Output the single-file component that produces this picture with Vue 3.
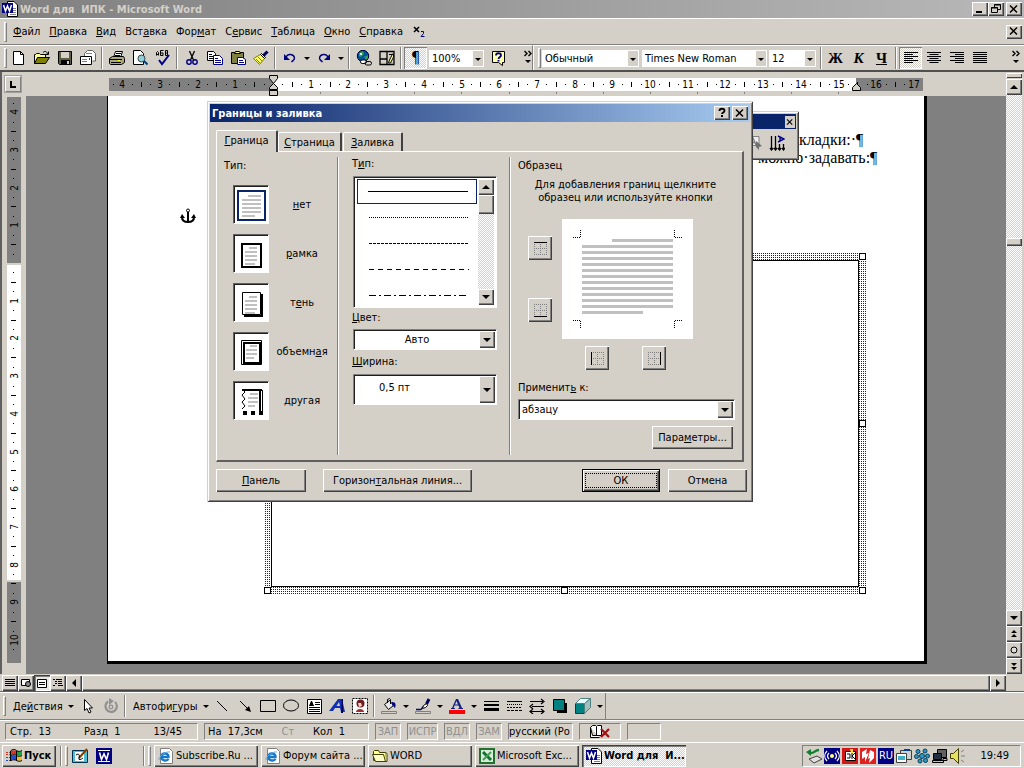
<script setup>
import { h } from 'vue'

const art = {
  word: '<path fill="#fff" stroke="#000" d="M5.500.5H12l3.500 3.500v11.500h-10z"/><path stroke="#808080" d="M11 7.500h3M11 9.500h3M11 11.500h3M8 13.500h6"/><path fill="#000080" d="M0 2h11v10H0z"/><path fill="none" stroke="#fff" stroke-width="1.500" d="M1.500 4l2 6 2-5 2 5 2-6"/>',
  newdoc: '<path fill="#fff" stroke="#000" d="M2.500 1.500h7l3 3v10h-10z"/><path fill="none" stroke="#000" d="M9.500 1.500v3h3"/>',
  open: '<path fill="#ffff9c" stroke="#000" d="M.5 13.500v-9h1l1-1h3l1 1h5v3"/><path fill="#808000" stroke="#000" d="M.5 13.500l3-6h12l-4 6z"/><path fill="none" stroke="#000" d="M9 2.500c2-2 4-1 4.500 1.500M11.500 4.500h3v-3"/>',
  save: '<path fill="#606040" stroke="#000" d="M1.500 1.500h13v13h-12l-1-1z"/><path fill="#d4d0c8" d="M4 2h8v6H4z"/><path fill="#000" d="M4 10h9v5H4z"/><path fill="#d4d0c8" d="M10 11h2v3h-2z"/>',
  mail: '<path fill="#fff" stroke="#606060" d="M4.500 7V3.500l3-3h5l3 3V11h-3"/><path fill="#fff" stroke="#000" d="M.5 6.500h11v8H.5z"/><path stroke="#808080" d="M2 9.500h5M2 11.500h5M6 3.500h6"/><path fill="#404040" d="M9 8h1v2H9z"/>',
  print: '<path fill="#fff" stroke="#000" d="M4.500 7.500l2-6h7l-2 6"/><path fill="#a8a878" stroke="#000" d="M.5 8.500l3-2h11l1 2v4l-3 2H1.500l-1-1z"/><path stroke="#000" d="M1 9.500h12M2 12.500h10M7 3.500h5M6 5.500h5"/><path fill="#ff0" d="M9 10h2v1H9z"/>',
  preview: '<path fill="#fff" stroke="#000" d="M1.500.5h7l3 3v11h-10z"/><circle cx="9.500" cy="8.500" r="3.500" fill="#8fd0d8" stroke="#404040"/><path stroke="#004080" stroke-width="2" d="M12 11l3.500 3.500"/>',
  spell: '<path fill="none" stroke="#000" d="M1.500 5.500v-3l1-1 1 1v3M1.500 4.500h2M8.500.5h-3v5h2.500V3H5.500M10.500.500v5h2V3h-1.500M10.500.500h2V3"/><path fill="none" stroke="#000080" stroke-width="2" d="M4 10l3 4 7-9"/>',
  cut: '<path stroke="#000" stroke-width="1.300" d="M5.500 1l4 9M10.500 1l-4 9"/><circle cx="5" cy="12" r="2.200" fill="none" stroke="#000080" stroke-width="1.400"/><circle cx="11" cy="12" r="2.200" fill="none" stroke="#000080" stroke-width="1.400"/>',
  copy: '<path fill="#fff" stroke="#000" d="M.5 1.500h6l2 2v7h-8z"/><path stroke="#000" d="M2 4.500h3M2 6.500h5M2 8.500h5"/><path fill="#fff" stroke="#000080" d="M6.500 5.500h6l3 3v6h-9z"/><path stroke="#000080" d="M8 8.500h3M8 10.500h6M8 12.500h6"/>',
  paste: '<path fill="#808040" stroke="#000" d="M1.500 2.500h12v11h-12z"/><path fill="#ffff9c" stroke="#000" d="M4.500 3.500l1-2h4l1 2z"/><path fill="#fff" stroke="#000080" d="M7.500 7.500h5l3 2v5h-8z"/><path stroke="#000080" d="M9 10.500h4M9 12.500h5"/>',
  brush: '<path fill="#ffff60" stroke="#808000" d="M.5 8.500l7-4 4 4-5 6z"/><path stroke="#808000" d="M3 9l4 4M5 7l4 4"/><path fill="#fff" stroke="#000" d="M7.500 4.500l1-1 4 4-1 1z"/><path stroke="#000060" stroke-width="3" d="M10.500 5.500l4-4"/>',
  undo: '<path fill="none" stroke="#000080" stroke-width="1.400" d="M4 7c2-4 8-3 8.500 1 0 2-1 2-3 4"/><path fill="#000080" d="M2 4v6h6z"/>',
  redo: '<path fill="none" stroke="#000080" stroke-width="1.400" d="M12 7c-2-4-8-3-8.500 1 0 2 1 2 3 4"/><path fill="#000080" d="M14 4v6H8z"/>',
  web: '<circle cx="7" cy="6" r="5.700" fill="#0050a0" stroke="#003"/><path fill="#30a050" d="M3 3l4-2 1 3-3 3-2-1zM8 7l4-2v3l-2 2z"/><path fill="#d8f0ff" d="M4 3h2v2H4z"/><rect x="4.500" y="10" width="6" height="3.500" rx="1.700" fill="#fff" stroke="#000"/><rect x="9" y="11.500" width="6.500" height="3.500" rx="1.700" fill="none" stroke="#000"/>',
  tables: '<path fill="none" stroke="#000" stroke-width="1.300" d="M1 1.500h14v13H1zM8 1v13M1 9h7"/><path fill="#ffff9c" stroke="#000" d="M9.500 13l1-3 3-6h1v3l-3 6zM10 4.500h4"/>',
  help: '<path fill="#ffffb0" stroke="#000" d="M1.500 1.500h12v11h-2v3l-4-3h-6z"/><path fill="none" stroke="#000080" stroke-width="1.800" d="M5 5.500c0-3 5-3 5 0 0 1.500-2.500 1.500-2.500 3.500"/><path fill="#000080" d="M6.500 10h2v1.500h-2z"/>',
  al: '<path stroke="#000" d="M1 2.500h14M1 4.500h9M1 6.500h14M1 8.500h9M1 10.500h14M1 12.500h9"/>',
  ac: '<path stroke="#000" d="M1 2.500h14M3.500 4.500h9M1 6.500h14M3.500 8.500h9M1 10.500h14M3.500 12.500h9"/>',
  ar: '<path stroke="#000" d="M1 2.500h14M6 4.500h9M1 6.500h14M6 8.500h9M1 10.500h14M6 12.500h9"/>',
  aj: '<path stroke="#000" d="M1 2.500h14M1 4.500h14M1 6.500h14M1 8.500h14M1 10.500h14M1 12.500h14"/>',
  sub: '<path stroke="#000" stroke-width="1.600" d="M2 3l5 5M7 3l-5 5"/><path fill="none" stroke="#000080" d="M9 7.500h2.500v2L9 12.500h3.500"/>',
  chev: '<path fill="none" stroke="#000" stroke-width="1.400" d="M4.500 1l2.500 2.500L4.500 6M8.500 1L11 3.500 8.500 6"/><path fill="#000" d="M5 10h6l-3 3z"/>',
  min: '<path fill="#000" d="M4 10h6v2H4z"/>',
  restore: '<path fill="none" stroke="#000" d="M6.500 6V3.500h6v5H10M6 4h7M3.500 6.500h6v5h-6zM3 7h7"/>',
  close: '<path stroke="#000" stroke-width="1.500" d="M4 4.500l7 7M11 4.500l-7 7"/>',
  q: '<path fill="none" stroke="#000" stroke-width="1.800" d="M5.500 6c0-3 5-3 5 0 0 1.500-2.500 1.500-2.500 3"/><path fill="#000" d="M7 10h2v2H7z"/>',
  up: '<path fill="#000" d="M4 10h8L8 6z"/>', down: '<path fill="#000" d="M4 6h8l-4 4z"/>',
  left: '<path fill="#000" d="M10 4v8L6 8z"/>', right: '<path fill="#000" d="M6 4v8l4-4z"/>',
  tri: '<path fill="#000" d="M5 7h6l-3 3z"/>',
  pgup: '<path fill="#000" d="M5 7h6L8 4zM5 11h6L8 8z"/>', pgdn: '<path fill="#000" d="M5 5h6l-3 3zM5 9h6l-3 3z"/>',
  ball: '<circle cx="8" cy="8" r="3" fill="#ddd" stroke="#000"/>',
  v1: '<path stroke="#000" d="M3 4.500h10M3 6.500h10M3 8.500h10M3 10.500h10"/>',
  v2: '<path fill="#fff" stroke="#000" d="M3.500 4.500h8v6h-8z"/><circle cx="10" cy="9" r="2.500" fill="#888" stroke="#000"/>',
  v3: '<path fill="#fff" stroke="#000" d="M3.500 4.500h9v8h-9z"/><path stroke="#000" d="M5 7.500h6M5 9.500h6"/>',
  v4: '<path stroke="#000" d="M3 4.500h2M6 4.500h6M5 6.500h2M8 6.500h4M5 8.500h2M8 8.500h4M3 10.500h2M8 10.500h5"/>',
  cursor: '<path fill="#fff" stroke="#000" d="M4.500 1.500v11l2.500-2 2 4.500 2-1-2-4h3.500z"/>',
  rotate: '<path fill="none" stroke="#909090" stroke-width="2.200" d="M12 4a5.700 5.700 0 1 1-7-.5"/><circle cx="8" cy="9" r="1.800" fill="none" stroke="#909090" stroke-width="1.300"/><path fill="#909090" d="M6 0l5 3-5 4z"/>',
  line: '<path stroke="#000" d="M3 3l10 10"/>',
  arrow: '<path stroke="#000" d="M3 3l9 9"/><path fill="#000" d="M14 14l-6-2 4-4z"/>',
  rect: '<path fill="none" stroke="#000" d="M.5 2.500h15v11H.5z"/>',
  oval: '<ellipse cx="8" cy="7.500" rx="7.500" ry="5.500" fill="none" stroke="#000"/>',
  tbox: '<path fill="#fff" stroke="#000" d="M1.500 1.500h14v14h-14z"/><path stroke="#000" d="M9 4.500h5M9 6.500h5M3 9.500h11M3 11.500h11M3 13.500h11M3.500 8l2-5 2 5M4 6.500h3"/>',
  wart: '<path fill="#1030b0" d="M0 13L9 1h4l3 13h-4l-1-4H6l-2 3zM7.500 8H11l-1-4z"/><path fill="#000060" d="M13 1h1v14h-2z"/>',
  clip: '<path fill="#fff" stroke="#000" stroke-dasharray="2 1" d="M.5.500h15v15H.5z"/><circle cx="8.500" cy="5.500" r="4" fill="#702020"/><path fill="#ffd0c0" d="M6 5h3l1 3-3 1z"/><path fill="#a03030" d="M4 14c0-4 8-4 8 0z"/>',
  fill: '<path fill="#e8e8e8" stroke="#000" d="M3.500 6.500l5-4 4 5-5 4z"/><path fill="none" stroke="#000" d="M6.500 5V1.500l2-1 1 1V6"/><path fill="#000080" d="M11 4c4 0 4 3 3 6l-3-3z"/><path fill="#d4d0c8" stroke="#808080" d="M.5 13.500h15v2H.5z"/>',
  pen: '<path fill="none" stroke="#000080" stroke-width="1.300" d="M1 11.500h5l2-3"/><path fill="#fff" stroke="#000" d="M7.500 10.500l1-3 3-2 1 2-2 2z"/><path stroke="#000060" stroke-width="3" d="M11.500 6L14 1"/><path fill="#d4d0c8" stroke="#808080" d="M.5 13.500h15v2H.5z"/>',
  fcol: '<path fill="#102080" d="M3 10L7 1h2l4 9h1v1H9.500v-1h1l-1-2.500h-4L4.500 10H6v1H2v-1zM6 6.500h3L7.500 3z"/><path fill="red" d="M0 12h16v4H0z"/>',
  lw: '<path fill="#000" d="M1 3h15v1H1zM1 6h15v2H1zM1 10h15v3H1z"/>',
  ls: '<path stroke="#000" stroke-dasharray="1 1" d="M1 6.500h15"/><path stroke="#000" stroke-dasharray="2 1" d="M1 9.500h15"/><path stroke="#000" stroke-dasharray="3 1" d="M1 12.500h15"/><path stroke="#000" d="M1 3.500h15"/>',
  as: '<path stroke="#000" d="M1 3.500h13M3 8.500h12M1 13.500h14"/><path fill="none" stroke="#000" stroke-width="1.200" d="M12 1l3 2.500L12 6M4 6L1 8.500 4 11M12 11l3 2.500-3 2.500M4 11l-3 2.500L4 16"/>',
  shad: '<path fill="#000" d="M5 5h10v10H5z"/><path fill="#008080" stroke="#000" d="M1.500 1.500h11v11h-11z"/>',
  cube: '<path fill="#008080" stroke="#004040" d="M.5 5.500h9v10h-9z"/><path fill="#e8ffff" stroke="#508080" d="M.5 5.500l5-5h10l-6 5z"/><path fill="#a0c0c0" stroke="#508080" d="M9.500 5.500l6-5v9l-6 6z"/>',
  ie: '<path fill="#fff" stroke="#808080" d="M2.500.5h9l3 3v12h-12z"/><path fill="none" stroke="#1878c8" stroke-width="2.400" d="M3 9h7.500C11 5 4 4 3.500 8.500 3 13 9 13.500 10.500 11"/><path fill="none" stroke="#60a8e0" d="M1 12C0 9 8 3 12 4"/>',
  folder: '<path fill="#ffff90" stroke="#404000" d="M1.500 12.500v-9l1-1h4l1 2h6v8z"/><path fill="#ffffc8" stroke="#404000" d="M13.500 13.500l-2-7H.5l3 7zM13.500 4.500l1.500 1v8h-2"/>',
  xls: '<path fill="#d8ead8" stroke="#207030" stroke-width="2" d="M1 1h14v14H1z"/><path stroke="#107030" stroke-width="3" d="M4 4l8 8"/><path stroke="#40a050" stroke-width="2" d="M12 4l-8 8"/>',
  win: '<path fill="#e03020" d="M5 3c2-1 3-1 5 0v4c-2-1-3-1-5 0z"/><path fill="#20a040" d="M11 3c2 1 3 1 5 0v4c-2 1-3 1-5 0z"/><path fill="#2050d0" d="M5 8c2-1 3-1 5 0v4c-2-1-3-1-5 0z"/><path fill="#f0c020" d="M11 8c2 1 3 1 5 0v4c-2 1-3 1-5 0z"/><path fill="none" stroke="#000" d="M4.500 13V3c2-2 4-2 6-.5s4 1 5.500 0M10.500 3v10M5 7.500c2-1 4-1 5.500 0s4 1 5.500 0M5 12.500c2-1 4-1 5.500 0s4 1 5.500 0"/><path stroke="#e03020" stroke-dasharray="2 1" d="M0 4.500h4M0 6.500h4"/><path stroke="#2050d0" stroke-dasharray="2 1" d="M0 9.500h4M0 12.500h4"/>',
  desk: '<path fill="#50c0d0" stroke="#003050" d="M.5 2.500h15v12H.5z"/><path fill="#fff" d="M3 4h9v9H3z"/><path stroke="#804000" stroke-width="2" d="M7 10l8-9"/><path fill="none" stroke="#000" d="M4 7c3-2 4 0 3 3s3 1 4 0"/>',
  wd: '<path fill="#fff" stroke="#000080" stroke-width="2" d="M1 1h14v14H1z"/><path fill="#000080" d="M2 3h12v10H2z"/><path fill="none" stroke="#fff" stroke-width="1.600" d="M3.500 4.500l2 7L8 6l2.500 5.500 2-7"/>',
  book: '<path fill="#fff" stroke="#000" d="M1.500 3.500l2-2h3l1 1 1-1h4v10H3.500zM7.500 2.500v9M1.500 3.500v10h9"/><path stroke="#a01010" stroke-width="2.200" d="M12 5l8 8M20 5l-8 8"/>',
  t1: '<path fill="#e0e0e0" stroke="#404040" d="M3 11l8-3 5 3-8 4z"/><path fill="none" stroke="#108030" stroke-width="2.500" d="M13 2C8 2 9 6 3 5"/><path fill="#108030" d="M0 4l5-3v7z"/>',
  t2: '<path fill="#000080" d="M0 0h16v16H0z"/><circle cx="8" cy="8" r="2" fill="#ffff80"/><path fill="none" stroke="#fff" stroke-width="1.200" d="M5 5c-2 2-2 4 0 6M11 5c2 2 2 4 0 6M3 3c-3 3-3 7 0 10M13 3c3 3 3 7 0 10"/>',
  t3: '<path fill="#d01818" d="M0 0h16v16H0z"/><path fill="#fff" stroke="#000" d="M3.500 3.500h10v9h-10z"/><path fill="none" stroke="#000" d="M5 6h3v4H5M10 5v6M10 8l3-3M10 8l3 3"/><path fill="#ffe020" d="M8 1h3v4H9z"/>',
  t4: '<path fill="#e02020" d="M0 0h16v16H0z"/><path fill="#fff" d="M2 4l5-3-1 5 3-1-4 9V9L2 11zM10 2l4 2v6l-5 5 1-5-2 1z"/>',
  t6: '<path fill="#d0d0d0" stroke="#404040" d="M4.500 2.500h11v9h-11z"/><path fill="#fff" stroke="#404040" d="M.5 5.500h10v9H.5z"/><path fill="#40b0c8" d="M2 8h7v4H2z"/><path stroke="#0040a0" stroke-width="2" d="M8 2h6"/>',
  t7: '<g fill="#3098c0" stroke="#004060"><circle cx="4" cy="3.500" r="2"/><circle cx="11" cy="3" r="2"/><circle cx="2.500" cy="8.500" r="2"/><circle cx="13.500" cy="8" r="2"/><circle cx="8" cy="8" r="2.500"/><circle cx="6" cy="13" r="2"/><circle cx="11.500" cy="12.500" r="2"/></g>',
  t8: '<path fill="#606060" stroke="#000" d="M5.500 1.500h9v8h-9z"/><path fill="#203040" stroke="#000" d="M1.500 5.500h8v6h-8z"/><path fill="#c0c0c0" stroke="#000" d="M.5 12.500h11v2H.5zM11 10.500h4v2h-4z"/>',
  t9: '<path fill="#e8e060" stroke="#404000" d="M.5 5.500h3l5-5v15l-5-5h-3z"/><path stroke="#808080" d="M11 4l3-2M11 8h4M11 12l3 2"/>',
  tdir: '<path stroke="#000" stroke-width="1.300" d="M2.500 1v14M6.500 1v14M10.500 9v6M14.500 9v6M1 13l1.500 2L4 13M5 13l1.500 2L8 13M9 13l1.500 2 1.500-2M13 13l1.500 2 1.500-2" fill="none"/><path fill="none" stroke="#000080" stroke-width="1.400" d="M9 1l6 3-6 3M11 2v4"/>',
  frame: '<path fill="#eee" stroke="#808080" d="M-4 1.500h16v9H-4z"/><path fill="none" stroke="#808080" stroke-width="1.400" d="M3 10l3-7 3 7M4 7.500h4"/><path fill="#707070" d="M9 6l6 5-3 1 0 3-3-3z"/>',
  anchor: '<circle cx="8" cy="2.500" r="1.500" fill="#fff" stroke="#000"/><path fill="none" stroke="#000" stroke-width="2" d="M8 4v10M2 9c0 3 2 5 6 5s6-2 6-5"/><path fill="#000" d="M0 10l2-4 3 4zM16 10l-2-4-3 4z"/>',
  bt: '<path stroke="#808080" stroke-dasharray="1 1" fill="none" d="M2.500 2v13M8.500 2v13M14.500 2v13M2 8.500h13M2 14.500h13"/><path stroke="#000" d="M2 2.500h13"/>',
  bb: '<path stroke="#808080" stroke-dasharray="1 1" fill="none" d="M2.500 2v13M8.500 2v13M14.500 2v13M2 8.500h13M2 2.500h13"/><path stroke="#000" d="M2 14.500h13"/>',
  bl: '<path stroke="#808080" stroke-dasharray="1 1" fill="none" d="M8.500 2v13M14.500 2v13M2 2.500h13M2 8.500h13M2 14.500h13"/><path stroke="#000" d="M2.500 2v13"/>',
  br: '<path stroke="#808080" stroke-dasharray="1 1" fill="none" d="M8.500 2v13M2.500 2v13M2 2.500h13M2 8.500h13M2 14.500h13"/><path stroke="#000" d="M14.500 2v13"/>',
}
const smallLines = '<path stroke="#c0c0c0" stroke-width="2" d="M14 12h8M10 16h12M10 20h12M10 24h12M10 28h10"/>'
const kinds = [
  { t: '&нет', a: '<path fill="#fff" stroke="#0a246a" stroke-width="2" d="M3 4h27v29H3z"/><path stroke="#c0c0c0" stroke-width="2" d="M13 9h13M7 13h19M7 17h19M7 21h19M7 25h19M7 29h13"/>' },
  { t: '&рамка', a: '<path fill="none" stroke="#000" stroke-width="2" d="M7 8h19v23H7z"/>' + smallLines },
  { t: 'т&ень', a: '<path fill="none" stroke="#000" d="M7.500 7.500h18v22h-18z"/><path stroke="#000" stroke-width="2" d="M9 31h18V9" fill="none"/>' + smallLines },
  { t: 'объемн&ая', a: '<path fill="none" stroke="#000" d="M6.500 6.500h20v24h-20z"/><path fill="none" stroke="#000" stroke-width="2" d="M9 9h16v20H9z"/><path stroke="#c0c0c0" stroke-width="2" d="M15 12h7M11 16h11M11 20h11M11 24h8"/>' },
  { t: '&другая', a: '<path fill="none" stroke="#000" d="M8 7l2 2-3 3 3 4-3 3 3 4-3 3"/><path fill="none" stroke="#000" stroke-width="2" d="M7 7h20M25 8v22"/><path stroke="#000" d="M27.500 7v22"/><path fill="#000" d="M8 28h4v4H8zM16 28h4v4h-4zM24 28h4v4h-4z"/><path stroke="#c0c0c0" stroke-width="2" d="M15 11h8M13 15h10M13 19h10M13 23h7"/>' },
]
const svg = (inner, w, hh) => h('svg', { width: w, height: hh, viewBox: `0 0 ${w} ${hh}`, 'aria-hidden': 'true', innerHTML: inner })
const Ic = (p) => svg(art[p.n], p.w || 16, 16)
Ic.props = ['n', 'w']
const Pic = (p) => svg(p.a, 33, 37)
Pic.props = ['a']
const Mn = (p) => {
  const i = p.t.indexOf('&')
  return i < 0 ? p.t : [p.t.slice(0, i), h('u', p.t[i + 1]), p.t.slice(i + 2)]
}
Mn.props = ['t']

const menus = ['&Файл', '&Правка', '&Вид', 'Вст&авка', 'Фор&мат', 'С&ервис', '&Таблица', '&Окно', '&Справка']
const std = ['newdoc', 'open', 'save', 'mail', '|', 'print', 'preview', 'spell', '|', 'cut', 'copy', 'paste', 'brush', '|', 'undo', 'v', 'redo', 'v', '|', 'web', 'tables', '|']
const draw = ['line', 'arrow', 'rect', 'oval', 'tbox', 'wart', 'clip', '|', 'fill', 'v', 'pen', 'v', 'fcol', 'v', 'lw', 'ls', 'as', 'shad', 'cube', 'v']
const cm = 37.7
const marks = (from, to, zero) => {
  const out = []
  for (let q = from * 4; q <= to * 4; q++) {
    if (q === 0) continue
    const at = Math.round(zero + (q * cm) / 4)
    const r = ((q % 4) + 4) % 4
    out.push({ q, at, kind: r === 0 ? 'n' : r === 2 ? 't' : 'd', label: Math.abs(q / 4) })
  }
  return out
}
const hMarks = marks(-4.25, 17, 164)
const vMarks = marks(-4.25, 10.25, 166)
const tabStops = Array.from({ length: 12 }, (_, i) => Math.round(164 + (i + 1) * 47.1))
const dashes = ['none', '1 1', '3 1', '5 4', '7 3 2 3']
const previewRows = Array.from({ length: 11 }, (_, i) => 27 + i * 6)
const tasks = [['ie', 'Subscribe.Ru ...'], ['ie', 'Форум сайта ...'], ['folder', 'WORD'], ['xls', 'Microsoft Exc...']]
</script>

<template>
  <div class="desktop">
    <header class="title">
      <Ic n="word" /><h1>Word для&nbsp; ИПК - Microsoft Word</h1>
      <button class="wbtn" aria-label="Свернуть"><Ic n="min" /></button>
      <button class="wbtn" aria-label="Восстановить"><Ic n="restore" /></button>
      <button class="wbtn last" aria-label="Закрыть"><Ic n="close" /></button>
    </header>

    <nav class="menubar">
      <i class="grip"></i>
      <button v-for="m in menus" :key="m"><Mn :t="m" /></button>
      <Ic n="sub" />
      <button class="wbtn last" aria-label="Закрыть документ"><Ic n="close" /></button>
    </nav>

    <div class="bars">
      <div class="bar std">
        <i class="grip"></i>
        <template v-for="(s, i) in std" :key="i">
          <i v-if="s === '|'" class="sep"></i>
          <button v-else-if="s === 'v'" class="tri" aria-label="Список"><Ic n="tri" /></button>
          <button v-else class="tool" :aria-label="s"><Ic :n="s" /></button>
        </template>
        <button class="tool pressed pil" aria-label="Непечатаемые знаки">¶</button>
        <label class="combo flat zoom"><select aria-label="Масштаб"><option>100%</option></select><span class="dd"><Ic n="tri" /></span></label>
        <button class="tool" aria-label="Справка"><Ic n="help" /></button>
        <button class="more" aria-label="Другие кнопки"><Ic n="chev" /></button>
      </div>
      <div class="bar fmt">
        <i class="grip"></i>
        <label class="combo flat style"><select aria-label="Стиль"><option>Обычный</option></select><span class="dd"><Ic n="tri" /></span></label>
        <label class="combo flat face"><select aria-label="Шрифт"><option>Times New Roman</option></select><span class="dd"><Ic n="tri" /></span></label>
        <label class="combo flat size"><select aria-label="Размер"><option>12</option></select><span class="dd"><Ic n="tri" /></span></label>
        <i class="sep"></i>
        <button class="tool ser">Ж</button>
        <button class="tool ser it">К</button>
        <button class="tool ser un">Ч</button>
        <i class="sep"></i>
        <button class="tool pressed" aria-label="По левому краю"><Ic n="al" /></button>
        <button class="tool" aria-label="По центру"><Ic n="ac" /></button>
        <button class="tool" aria-label="По правому краю"><Ic n="ar" /></button>
        <button class="tool" aria-label="По ширине"><Ic n="aj" /></button>
        <button class="more" aria-label="Другие кнопки"><Ic n="chev" /></button>
      </div>
    </div>

    <main class="work">
      <div class="left">
        <div class="hruler">
          <button class="tabsel" aria-label="Табуляция"><svg width="14" height="14"><path d="M5 4v6h5" fill="none" stroke="#000" stroke-width="2" /></svg></button>
          <svg class="hr" width="816" height="24">
            <rect y="6" width="164" height="13" fill="#808080" /><rect x="164" y="6" width="583" height="13" fill="#fff" /><rect x="747" y="6" width="67" height="13" fill="#808080" />
            <template v-for="m in hMarks" :key="m.q">
              <text v-if="m.kind === 'n'" :x="m.at" y="16" text-anchor="middle">{{ m.label }}</text>
              <rect v-else :x="m.at" :y="m.kind === 't' ? 10 : 12" width="1" :height="m.kind === 't' ? 5 : 1" />
            </template>
            <rect v-for="t in tabStops" :key="t" :x="t" y="20" width="1" height="2" fill="#808080" />
            <path d="M160.500 3.500h8v3l-4 5-4-5zM160.500 17.500v-2l4-4 4 4v2zM160.500 18.500h8v5h-8z" fill="#d4d0c8" stroke="#000" />
            <path d="M743.500 18.500v-3l4-4 4 4v3z" fill="#d4d0c8" stroke="#000" />
          </svg>
        </div>
        <div class="view">
          <div class="vruler">
            <svg width="14" height="566">
              <rect width="14" height="166" fill="#808080" /><rect y="168" width="14" height="315" fill="#fff" /><rect y="485" width="14" height="81" fill="#808080" />
              <template v-for="m in vMarks" :key="m.q">
                <text v-if="m.kind === 'n'" :transform="`translate(11 ${m.at}) rotate(-90)`" text-anchor="middle">{{ m.label }}</text>
                <rect v-else :x="m.kind === 't' ? 4 : 6" :y="m.at" :width="m.kind === 't' ? 5 : 1" height="1" />
              </template>
            </svg>
          </div>
          <div class="canvas">
            <article class="page">
              <p class="p1">кладки:·¶</p>
              <p class="p2">можно·задавать:¶</p>
              <span class="anchor"><Ic n="anchor" /></span>
              <div class="frame"><div class="inner"></div>
                <b class="h tl"></b><b class="h tr"></b><b class="h r"></b><b class="h bl"></b><b class="h bm"></b><b class="h br"></b>
              </div>
            </article>
          </div>
        </div>
      </div>
      <div class="vscroll">
        <i class="split"></i>
        <button class="sb" aria-label="Вверх"><Ic n="up" /></button>
        <div class="track"><i class="thumb"></i></div>
        <button class="sb" aria-label="Вниз"><Ic n="down" /></button>
        <button class="sb" aria-label="Предыдущая страница"><Ic n="pgup" /></button>
        <button class="sb" aria-label="Выбор объекта"><Ic n="ball" /></button>
        <button class="sb" aria-label="Следующая страница"><Ic n="pgdn" /></button>
      </div>
    </main>

    <div class="hscroll">
      <button v-for="n in ['v1', 'v2', 'v3', 'v4', 'left']" :key="n" class="sb" :class="{ on: n === 'v3' }" :aria-label="n"><Ic :n="n" /></button>
      <div class="hthumb"></div>
      <button class="sb" aria-label="Вправо"><Ic n="right" /></button>
    </div>

    <div class="drawrow">
      <div class="bar draw">
        <i class="grip"></i>
        <button class="txt act"><span><Mn t="Де&йствия" /></span><Ic n="tri" /></button>
        <button class="tool" aria-label="Выбор"><Ic n="cursor" /></button>
        <button class="tool" aria-label="Вращение"><Ic n="rotate" /></button>
        <i class="sep"></i>
        <button class="txt auto"><span><Mn t="Автофи&гуры" /></span><Ic n="tri" /></button>
        <template v-for="(s, i) in draw" :key="i">
          <i v-if="s === '|'" class="sep"></i>
          <button v-else-if="s === 'v'" class="tri" aria-label="Список"><Ic n="tri" /></button>
          <button v-else class="tool" :aria-label="s"><Ic :n="s" /></button>
        </template>
      </div>
    </div>

    <footer class="status">
      <div class="cell pos"><span>Стр.&nbsp; 13</span><span>Разд&nbsp; 1</span><span>13/45</span></div>
      <div class="cell at"><span>На&nbsp; 17,3см</span><span class="dim">Ст</span><span>Кол&nbsp; 1</span></div>
      <div class="cell dim n1">ЗАП</div><div class="cell dim n2">ИСПР</div><div class="cell dim n1">ВДЛ</div><div class="cell dim n1">ЗАМ</div>
      <div class="cell lang">русский (Ро</div>
      <div class="cell bk"><Ic n="book" w="22" /></div>
      <div class="cell n3"></div>
    </footer>

    <div class="taskbar">
      <button class="start"><Ic n="win" />Пуск</button>
      <i class="line"></i><i class="grip"></i>
      <div class="quick"><Ic n="desk" /><Ic n="wd" /></div>
      <i class="line"></i><i class="grip"></i>
      <div class="tasks">
        <button v-for="t in tasks" :key="t[1]" class="task"><Ic :n="t[0]" />{{ t[1] }}</button>
        <button class="task active"><Ic n="word" />Word для&nbsp; И...</button>
      </div>
      <div class="tray">
        <Ic v-for="n in ['t1', 't2', 't3', 't4']" :key="n" :n="n" /><span class="ru">RU</span><Ic v-for="n in ['t6', 't7', 't8', 't9']" :key="n" :n="n" />
        <time>19:49</time>
      </div>
    </div>

    <aside class="float">
      <div class="ftitle"><button class="fx" aria-label="Закрыть панель"><Ic n="close" /></button></div>
      <div class="ftools"><Ic n="frame" /><Ic n="tdir" /></div>
    </aside>

    <section class="dialog" role="dialog" aria-label="Границы и заливка">
      <div class="dtitle"><h2>Границы и заливка</h2>
        <button class="wbtn" aria-label="Справка"><Ic n="q" /></button>
        <button class="wbtn last" aria-label="Закрыть"><Ic n="close" /></button>
      </div>
      <div class="tabs" role="tablist">
        <button role="tab" aria-selected="true" class="tab sel"><Mn t="&Граница" /></button>
        <button role="tab" class="tab mid"><Mn t="&Страница" /></button>
        <button role="tab" class="tab"><Mn t="&Заливка" /></button>
      </div>
      <div class="panel">
        <div class="col kinds">
          <div class="lab">Тип:</div>
          <button v-for="k in kinds" :key="k.t" class="kind"><span class="kp"><Pic :a="k.a" /></span><span class="kt"><Mn :t="k.t" /></span></button>
        </div>
        <div class="col lines">
          <div class="lab"><Mn t="Т&ип:" /></div>
          <div class="list">
            <div class="opts" role="listbox" aria-label="Тип линии">
              <div v-for="(d, i) in dashes" :key="d" class="opt" :class="{ cur: i === 0 }" role="option">
                <svg width="100" height="3"><path d="M0 1.500h100" stroke="#000" :stroke-dasharray="d" /></svg>
              </div>
            </div>
            <div class="lscroll"><button class="sb" aria-label="Вверх"><Ic n="up" /></button><i class="lthumb"></i><button class="sb end" aria-label="Вниз"><Ic n="down" /></button></div>
          </div>
          <label class="lab" for="color"><Mn t="&Цвет:" /></label>
          <div class="combo deep"><select id="color" class="c"><option>Авто</option></select><span class="dd"><Ic n="down" /></span></div>
          <label class="lab" for="width"><Mn t="&Ширина:" /></label>
          <div class="combo deep tall"><select id="width"><option>0,5 пт</option></select><span class="dd"><Ic n="down" /></span></div>
        </div>
        <div class="col sample">
          <div class="lab">Образец</div>
          <p class="hint">Для добавления границ щелкните<br>образец или используйте кнопки</p>
          <div class="pv">
            <div class="side"><button class="bb" aria-label="Верхняя граница"><Ic n="bt" /></button><button class="bb" aria-label="Нижняя граница"><Ic n="bb" /></button></div>
            <svg class="sheet" width="131" height="120">
              <rect width="131" height="120" fill="#fff" />
              <g fill="#c0c0c0"><rect x="50" y="20" width="61" height="3" /><rect v-for="y in previewRows" :key="y" x="20" :y="y - 1" width="91" height="3" /><rect x="20" y="92" width="61" height="3" /></g>
              <path d="M11 18.500h7.500V10M120 18.500h-7.500V10M11 101.500h7.500V110M120 101.500h-7.500V110" fill="none" stroke="#000" stroke-dasharray="1 1" />
            </svg>
          </div>
          <div class="under"><button class="bb" aria-label="Левая граница"><Ic n="bl" /></button><button class="bb" aria-label="Правая граница"><Ic n="br" /></button></div>
          <label class="lab" for="apply"><Mn t="Применит&ь к:" /></label>
          <div class="combo deep wide"><select id="apply"><option>абзацу</option></select><span class="dd"><Ic n="down" /></span></div>
          <button class="push param"><Mn t="Пара&метры..." /></button>
        </div>
      </div>
      <div class="actions">
        <button class="push a1"><Mn t="&Панель" /></button>
        <button class="push a2"><Mn t="Горизон&тальная линия..." /></button>
        <button class="push def"><span>ОК</span></button>
        <button class="push a4">Отмена</button>
      </div>
    </section>
  </div>
</template>

<style>
body { margin: 0; background: #d4d0c8; overflow: hidden; }
</style>

<style scoped>
.desktop { position: relative; display: flex; flex-direction: column; height: 100vh; background: #d4d0c8; color: #000; font: 11px/13px "DejaVu Sans Condensed", "DejaVu Sans", sans-serif; white-space: nowrap; }
.desktop * { box-sizing: border-box; }
button, select { font: inherit; color: inherit; padding: 0; margin: 0; border: 0; background: transparent; border-radius: 0; white-space: nowrap; }
select { appearance: none; outline: 0; width: 100%; height: 100%; }
h1, h2, p { margin: 0; font: inherit; }
i, b { display: block; flex: none; }
svg { display: block; flex: none; }
u { text-underline-offset: 2px; }
.title { display: flex; align-items: center; flex: none; height: 18px; padding: 0 2px; background: linear-gradient(90deg, #808080, #b8b8b8); color: #d4d0c8; }
h1 { flex: 1; font-weight: bold; padding-left: 2px; }
.wbtn { display: grid; place-items: center; flex: none; width: 16px; height: 14px; overflow: hidden; background: #d4d0c8; box-shadow: inset 1px 1px #fff, inset -1px -1px #404040, inset -2px -2px #808080; }
.wbtn svg { margin: -2px 0 -1px; }
.wbtn.last { margin-left: 2px; }
.menubar { display: flex; align-items: center; flex: none; height: 27px; gap: 9px; padding: 0 2px 0 4px; border-top: 1px solid #fff; border-bottom: 1px solid #808080; }
.menubar .wbtn { margin-left: auto; }
.menubar .grip { margin-right: -3px; }
.grip { width: 3px; height: 20px; border: 1px solid; border-color: #fff #808080 #808080 #fff; }
.bars { display: flex; flex: none; height: 27px; border-bottom: 2px solid #505050; }
.bar { display: flex; align-items: center; border-top: 1px solid #fff; border-right: 1px solid #808080; }
.std { flex: 0 0 533px; padding-left: 4px; }
.fmt { flex: 1; border-left: 1px solid #fff; border-right: 0; padding-left: 4px; }
.tool { display: grid; place-items: center; flex: none; width: 23px; height: 22px; }
.pressed { background: repeating-conic-gradient(#fff 0 25%, #d4d0c8 0 50%) 0 0 / 2px 2px; box-shadow: inset 1px 1px #808080, inset -1px -1px #fff; }
.pil { font-size: 16px; line-height: 20px; }
.sep { width: 2px; height: 22px; margin: 0 2px; border-left: 1px solid #808080; border-right: 1px solid #fff; }
.tri { width: 11px; height: 22px; display: grid; place-items: center; overflow: hidden; }
.tri svg { margin: 0 -3px; }
.ser { font: bold 15px/18px "Liberation Serif", serif; }
.it { font-style: italic; }
.un { text-decoration: underline; }
.more { width: 16px; display: grid; place-items: center; margin-left: auto; }
.std .more { margin-right: -4px; margin-left: 10px; }
.combo { position: relative; display: block; flex: none; background: #fff; }
.flat { height: 17px; }
.flat select { padding-left: 3px; }
.flat .dd { position: absolute; right: 1px; top: 1px; width: 10px; height: 15px; display: grid; place-items: center; overflow: hidden; background: #d4d0c8; pointer-events: none; }
.flat .dd svg { margin: 0 -3px; }
.zoom { width: 55px; margin: 0 3px 0 2px; }
.style { width: 97px; margin: 0 3px 0 1px; }
.face { width: 125px; margin-right: 2px; }
.size { width: 47px; margin-right: 2px; }
.work { display: flex; flex: 1; min-height: 0; border-left: 2px solid #606060; }
.left { flex: 1; min-width: 0; display: flex; flex-direction: column; }
.hruler { display: flex; flex: none; height: 24px; }
.tabsel { width: 16px; height: 16px; margin: 4px 0 0 3px; display: grid; place-items: center; border: 1px solid; border-color: #fff #808080 #808080 #fff; box-shadow: 0 0 0 1px #a0a0a0; }
.hr { margin-left: 88px; }
text { font-size: 10px; }
.view { display: flex; flex: 1; min-height: 0; }
.vruler { width: 24px; padding: 1px 0 0 5px; flex: none; }
.canvas { flex: 1; background: #808080; padding: 0 79px 0 81px; overflow: hidden; }
.page { position: relative; height: 568px; background: #fff; border: 1px solid #000; border-width: 0 3px 3px 1px; font: 16px/18px "Liberation Serif", serif; }
.page p { position: absolute; }
.p1 { left: 691px; top: 35px; }
.p2 { left: 650px; top: 53px; }
.anchor { position: absolute; left: 72px; top: 112px; }
.frame { position: absolute; left: 156px; top: 157px; right: 58px; height: 341px; padding: 7px; background: repeating-conic-gradient(#222 0 25%, #fff 0 100%) 0 0 / 2px 2px; }
.inner { height: 100%; background: #fff; border: 1px solid #000; }
.h { position: absolute; width: 7px; height: 7px; background: #fff; border: 1px solid #000; }
.tl { left: 0; top: 0; } .tr { right: 0; top: 0; } .r { right: 0; top: 167px; } .bl { left: 0; bottom: 0; } .bm { left: 297px; bottom: 0; } .br { right: 0; bottom: 0; }
.vscroll { display: flex; flex-direction: column; flex: none; width: 18px; padding-right: 2px; }
.split { height: 5px; margin: 1px 0; box-shadow: inset 1px 1px #fff, inset -1px -1px #404040; }
.sb { display: grid; place-items: center; flex: none; width: 16px; height: 16px; background: #d4d0c8; box-shadow: inset 1px 1px #fff, inset -1px -1px #404040, inset -2px -2px #808080; }
.sb.on { box-shadow: inset 1px 1px #404040, inset 2px 2px #808080, inset -1px -1px #fff; background: #eae8e4; }
.track { flex: 1; padding-top: 143px; background: repeating-conic-gradient(#fff 0 25%, #d4d0c8 0 50%) 0 0 / 2px 2px; }
.thumb { height: 8px; background: #d4d0c8; box-shadow: inset 1px 1px #fff, inset -1px -1px #404040, inset -2px -2px #808080; }
.hscroll { display: flex; flex: none; height: 18px; padding: 1px 18px 0 2px; border-bottom: 1px solid #606060; }
.hthumb { flex: 1; box-shadow: inset 1px 1px #fff, inset -1px -1px #404040, inset -2px -2px #808080; }
.drawrow { display: flex; flex: none; height: 28px; border-top: 1px solid #fff; border-bottom: 1px solid #808080; }
.draw { padding-left: 3px; border-top: 0; }
.txt { display: flex; align-items: center; justify-content: space-between; flex: none; }
.act { width: 67px; padding-left: 7px; margin-right: 3px; }
.auto { width: 82px; padding-left: 5px; }
.txt svg { margin-right: -4px; }
.status { display: flex; align-items: center; flex: none; height: 22px; padding-left: 5px; gap: 6px; border-top: 1px solid #fff; }
.cell { display: flex; align-items: center; justify-content: center; flex: none; height: 17px; overflow: hidden; border: 1px solid; border-color: #808080 #fff #fff #808080; }
.pos { width: 193px; justify-content: space-between; padding: 0 15px 0 4px; }
.at { width: 165px; justify-content: space-between; padding: 0 23px 0 3px; }
.dim { color: #909090; }
.n1 { width: 26px; } .n2 { width: 31px; } .n3 { width: 34px; } .lang { width: 65px; justify-content: flex-start; } .bk { width: 42px; }
.taskbar { display: flex; align-items: center; flex: none; height: 26px; padding: 0 3px 0 2px; border-top: 1px solid #fff; }
.start { display: flex; align-items: center; gap: 2px; width: 54px; height: 22px; padding-left: 4px; font-weight: bold; box-shadow: inset 1px 1px #fff, inset -1px -1px #404040, inset -2px -2px #808080; overflow: hidden; }
.line { width: 2px; height: 20px; margin: 0 3px 0 4px; border-left: 1px solid #808080; border-right: 1px solid #fff; }
.quick { display: flex; gap: 8px; width: 71px; padding-left: 4px; }
.tasks { display: flex; flex: 1; gap: 3px; padding-left: 3px; }
.task { display: flex; align-items: center; gap: 2px; width: 104px; height: 22px; padding-left: 4px; overflow: hidden; box-shadow: inset 1px 1px #fff, inset -1px -1px #404040, inset -2px -2px #808080; }
.active { font-weight: bold; background: repeating-conic-gradient(#fff 0 25%, #d4d0c8 0 50%) 0 0 / 2px 2px; box-shadow: inset 1px 1px #404040, inset 2px 2px #808080, inset -1px -1px #fff; }
.tray { display: flex; align-items: center; gap: 2px; width: 219px; height: 22px; padding-left: 3px; border: 1px solid; border-color: #808080 #fff #fff #808080; }
.ru { width: 16px; height: 16px; background: #000080; color: #fff; line-height: 16px; text-align: center; }
time { margin: 0 11px 0 auto; }
.float { position: absolute; left: 700px; top: 111px; width: 99px; height: 49px; padding: 3px; background: #d4d0c8; box-shadow: inset 1px 1px #d4d0c8, inset -1px -1px #404040, inset 2px 2px #fff, inset -2px -2px #808080; }
.ftitle { height: 15px; background: #0a246a; display: flex; justify-content: flex-end; align-items: center; padding-right: 1px; }
.fx { width: 10px; height: 12px; background: #d4d0c8; display: grid; place-items: center; overflow: hidden; }
.fx svg { width: 12px; height: 12px; margin: 0 -1px; }
.ftools { display: flex; justify-content: flex-end; gap: 6px; padding: 6px 11px 0 0; }
.dialog { position: absolute; left: 207px; top: 101px; width: 546px; padding: 3px; background: #d4d0c8; box-shadow: inset 1px 1px #d4d0c8, inset -1px -1px #404040, inset 2px 2px #fff, inset -2px -2px #808080; }
.dtitle { display: flex; align-items: center; height: 18px; padding: 0 2px; background: linear-gradient(90deg, #0a246a, #a6caf0); color: #fff; }
h2 { flex: 1; font-weight: bold; }
.dtitle .wbtn { color: #000; }
.tabs { display: flex; align-items: flex-end; height: 29px; padding: 8px 6px 0; }
.tab { width: 60px; height: 19px; border: solid; border-color: #fff #404040 #fff #fff; border-width: 1px 2px 0 1px; border-radius: 2px 2px 0 0; }
.tab.mid { width: 64px; margin-right: 1px; }
.tab.sel { position: relative; width: 62px; height: 22px; margin-bottom: -1px; padding-bottom: 2px; background: #d4d0c8; }
.panel { display: flex; height: 311px; margin: 0 6px; padding: 5px 0; border: solid; border-color: #fff #606060 #606060 #fff; border-width: 1px 2px 2px 1px; }
.lab { display: block; line-height: 14px; }
.kinds { width: 121px; padding: 2px 0 0 7px; border-right: 1px solid #808080; box-shadow: 1px 0 #fff; }
.kinds .lab { margin-bottom: 12px; }
.kind { display: flex; align-items: center; width: 110px; height: 39px; margin: 0 0 10px 9px; }
.kp { width: 36px; height: 39px; padding: 1px; background: #fff; border: 1px solid; border-color: #606060 #fff #fff #606060; box-shadow: inset 1px 1px #202020; overflow: hidden; }
.kt { flex: 1; text-align: center; padding-right: 8px; }
.lines { width: 175px; padding-left: 14px; border-right: 1px solid #808080; box-shadow: 1px 0 #fff; }
.list { display: flex; width: 144px; height: 132px; margin: 5px 0 3px 1px; padding: 2px; background: #fff; border: 1px solid; border-color: #808080 #fff #fff #808080; box-shadow: inset 1px 1px #202020; }
.opts { flex: 1; padding-left: 1px; }
.opt { display: grid; place-items: center; height: 26px; margin-right: 1px; padding-left: 3px; }
.cur { height: 25px; border: 1px solid #0a246a; padding-left: 2px; }
.lscroll { display: flex; flex-direction: column; width: 16px; background: repeating-conic-gradient(#fff 0 25%, #d4d0c8 0 50%) 0 0 / 2px 2px; }
.lthumb { height: 19px; background: #d4d0c8; box-shadow: inset 1px 1px #fff, inset -1px -1px #404040, inset -2px -2px #808080; }
.end { margin-top: auto; }
.deep { height: 21px; border: 1px solid; border-color: #808080 #fff #fff #808080; box-shadow: inset 1px 1px #202020; }
.deep select { padding: 0 20px 0 4px; }
.deep .dd { position: absolute; right: 1px; top: 1px; bottom: 1px; width: 16px; display: grid; place-items: center; overflow: hidden; background: #d4d0c8; box-shadow: inset 1px 1px #fff, inset -1px -1px #404040, inset -2px -2px #808080; pointer-events: none; }
.lines .combo { width: 144px; margin: 4px 0 5px 1px; }
.c { text-align-last: center; }
.tall.deep { height: 31px; margin-top: 5px; }
.tall select { padding: 0 20px 4px 25px; }
.sample { flex: 1; padding: 2px 7px 0 8px; }
.hint { text-align: center; margin: 5px 0 15px; padding-right: 2px; }
.pv { display: flex; gap: 10px; padding-left: 10px; }
.side { display: flex; flex-direction: column; gap: 38px; padding-top: 17px; }
.bb { display: grid; place-items: center; width: 24px; height: 24px; box-shadow: inset 1px 1px #fff, inset -1px -1px #404040, inset -2px -2px #808080; }
.under { display: flex; gap: 33px; padding: 7px 0 11px 67px; }
.wide { width: 217px; margin-top: 4px; }
.wide select { padding-left: 3px; }
.push { display: grid; grid-auto-flow: column; place-content: center; height: 23px; box-shadow: inset 1px 1px #fff, inset -1px -1px #404040, inset -2px -2px #808080; }
.param { width: 81px; margin: 6px 2px 0 auto; }
.actions { display: flex; padding: 7px 3px 7px 6px; }
.a1 { width: 90px; } .a2 { width: 149px; margin: 0 auto 0 17px; }
.def { display: block; width: 78px; padding: 4px; border: 1px solid #000; height: 23px; }
.def span { display: block; line-height: 11px; outline: 1px dotted #000; outline-offset: 1px; }
.a4 { width: 79px; margin-left: 8px; }
</style>
